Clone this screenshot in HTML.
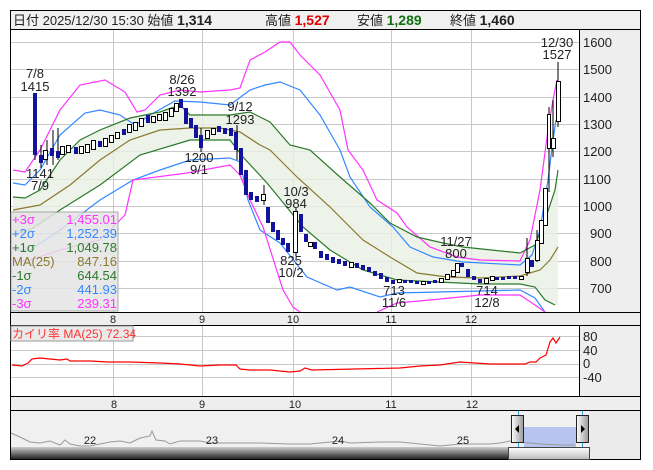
<!DOCTYPE html>
<html><head><meta charset="utf-8"><style>
body{margin:0;background:#fff;width:653px;height:470px;overflow:hidden;font-family:"Liberation Sans","Noto Sans CJK JP",sans-serif}
svg{position:absolute;left:0;top:0}
</style></head><body>
<svg width="653" height="470" viewBox="0 0 653 470" xmlns="http://www.w3.org/2000/svg" font-family="Liberation Sans, Noto Sans CJK JP, sans-serif">
<!-- header -->
<rect x="10.5" y="10.5" width="630" height="19" fill="#f0f0f0" stroke="#000"/>
<g font-size="13" fill="#222">
<text x="13" y="25">日付 2025/12/30 15:30 始値 <tspan font-weight="bold" font-size="14">1,314</tspan></text>
<text x="265" y="25">高値 <tspan font-weight="bold" font-size="14" fill="#e00000">1,527</tspan></text>
<text x="357" y="25">安値 <tspan font-weight="bold" font-size="14" fill="#107010">1,289</tspan></text>
<text x="450" y="25">終値 <tspan font-weight="bold" font-size="14">1,460</tspan></text>
</g>
<!-- main chart frame -->
<rect x="10.5" y="29.5" width="630" height="283" fill="#fff" stroke="#000"/>
<rect x="579" y="30" width="61" height="282" fill="#eeeeee"/>
<line x1="579.5" y1="30" x2="579.5" y2="312" stroke="#000"/>
<g stroke="#c8c8c8" stroke-width="1">
<line x1="11" y1="42.5" x2="579" y2="42.5"/><line x1="11" y1="69.5" x2="579" y2="69.5"/><line x1="11" y1="97.5" x2="579" y2="97.5"/><line x1="11" y1="124.5" x2="579" y2="124.5"/><line x1="11" y1="151.5" x2="579" y2="151.5"/><line x1="11" y1="179.5" x2="579" y2="179.5"/><line x1="11" y1="206.5" x2="579" y2="206.5"/><line x1="11" y1="233.5" x2="579" y2="233.5"/><line x1="11" y1="261.5" x2="579" y2="261.5"/><line x1="11" y1="288.5" x2="579" y2="288.5"/>
<line x1="113.5" y1="30" x2="113.5" y2="312"/><line x1="202.5" y1="30" x2="202.5" y2="312"/><line x1="293.5" y1="30" x2="293.5" y2="312"/><line x1="391.5" y1="30" x2="391.5" y2="312"/><line x1="471.5" y1="30" x2="471.5" y2="312"/>
</g>
<g font-size="13" fill="#222">
<text x="583" y="47">1600</text><text x="583" y="74">1500</text><text x="583" y="102">1400</text><text x="583" y="129">1300</text><text x="583" y="156">1200</text><text x="583" y="184">1100</text><text x="583" y="211">1000</text><text x="590" y="238">900</text><text x="590" y="266">800</text><text x="590" y="293">700</text>
</g>
<!-- shaded band -->
<polygon fill="#e8f0e4" opacity="0.8" points="13,197 25,198 40,190 60,160 80,140 100,130 130,118 160,112 180,105 190,115 230,115 250,112 270,122 290,145 310,150 340,177 370,203 390,223 417,237 443,243 463,247 520,253 535,245 545,220 555,190 558,170 558,305 555,305 545,300 535,287 520,284 480,284 397,280 363,270 330,250 303,227 267,183 243,157 230,140 190,140 140,155 100,185 60,210 30,230 13,235"/>
<g fill="none" stroke-width="1.2">
<polyline stroke="#ff33ff" points="13,170 25,172 40,150 60,110 80,85 105,80 125,92 137,112 145,110 160,95 180,90 200,92 230,90 240,88 250,60 265,52 280,42 290,42 300,55 320,75 340,110 348,150 363,170 377,200 397,213 407,227 430,247 457,257 480,260 520,261 530,240 540,190 548,130 553,100 557,80"/>
<polyline stroke="#3388ff" points="13,183 25,185 40,170 60,135 85,113 100,110 120,115 135,125 150,115 175,101 200,102 230,105 250,90 265,85 280,82 300,90 320,115 340,150 350,177 370,207 393,227 410,247 433,257 463,262 520,265 532,255 540,230 548,180 553,140 556,120"/>
<polyline stroke="#2a7a2a" points="13,197 25,198 40,190 60,160 80,140 100,130 130,118 160,112 180,105 190,115 230,115 250,112 270,122 290,145 310,150 340,177 370,203 390,223 417,237 443,243 463,247 520,253 535,245 545,220 555,190 558,170"/>
<polyline stroke="#8a7a30" points="13,210 40,205 70,185 100,160 130,140 160,130 190,128 220,128 240,132 260,145 270,150 297,177 330,207 363,240 390,257 417,273 447,277 480,278 520,276 540,270 550,260 558,247"/>
<polyline stroke="#2a7a2a" points="13,235 30,230 60,210 100,185 140,155 190,140 230,140 243,157 267,183 303,227 330,250 363,270 397,280 480,284 520,284 535,287 545,300 555,305"/>
<polyline stroke="#3388ff" points="13,250 30,250 60,230 100,200 133,180 160,170 190,160 230,158 240,162 248,200 260,230 280,243 307,277 337,290 350,287 380,297 397,293 480,291 520,290 535,298 545,312"/>
<polyline stroke="#ff33ff" points="13,262 30,260 60,250 100,240 125,215 133,180 187,173 230,165 240,175 250,200 263,227 283,290 293,307 300,312"/>
<polyline stroke="#ff33ff" points="377,312 397,303 430,300 480,295 520,295 535,305 545,312"/>
</g>
<!-- candles -->
<g stroke="#000" stroke-width="1">
<line x1="35" y1="93" x2="35" y2="160"/><line x1="41" y1="145" x2="41" y2="168"/><line x1="47" y1="140" x2="47" y2="165"/><line x1="53" y1="130" x2="53" y2="165"/><line x1="58" y1="128" x2="58" y2="160"/>
<line x1="201" y1="128" x2="201" y2="152"/><line x1="237" y1="125" x2="237" y2="160"/><line x1="264" y1="185" x2="264" y2="205"/><line x1="296" y1="208" x2="296" y2="256"/>
<line x1="527" y1="238" x2="527" y2="276"/><line x1="537" y1="230" x2="537" y2="262"/><line x1="549" y1="107" x2="549" y2="192"/><line x1="553" y1="100" x2="553" y2="157"/><line x1="558" y1="62" x2="558" y2="127"/>
</g>
<g fill="#12129a">
<rect x="33" y="93" width="4" height="62"/><rect x="39" y="155" width="4" height="8"/><rect x="50" y="148" width="4" height="8"/><rect x="56" y="151" width="4" height="7"/><rect x="74" y="147" width="4" height="7"/><rect x="98" y="141" width="4" height="6"/><rect x="122" y="129" width="4" height="6"/><rect x="146" y="115" width="4" height="8"/>
<rect x="179" y="99" width="4" height="9"/><rect x="184" y="108" width="4" height="16"/><rect x="189" y="118" width="4" height="10"/><rect x="194" y="125" width="4" height="13"/><rect x="199" y="135" width="4" height="13"/><rect x="217" y="126" width="4" height="6"/><rect x="223" y="128" width="4" height="6"/><rect x="229" y="128" width="4" height="8"/><rect x="234" y="132" width="4" height="18"/><rect x="239" y="148" width="4" height="27"/><rect x="244" y="170" width="4" height="25"/><rect x="249" y="192" width="4" height="8"/><rect x="255" y="196" width="4" height="6"/>
<rect x="266" y="207" width="4" height="16"/><rect x="271" y="222" width="4" height="10"/><rect x="276" y="230" width="4" height="10"/><rect x="281" y="238" width="4" height="7"/><rect x="286" y="243" width="4" height="9"/><rect x="299" y="214" width="4" height="18"/><rect x="304" y="234" width="4" height="8"/><rect x="313" y="242" width="4" height="7"/><rect x="319" y="251" width="4" height="7"/><rect x="325" y="254" width="4" height="6"/><rect x="331" y="257" width="4" height="6"/><rect x="337" y="259" width="4" height="5"/><rect x="343" y="261" width="4" height="5"/><rect x="355" y="263" width="4" height="5"/><rect x="361" y="265" width="4" height="5"/><rect x="367" y="267" width="4" height="5"/><rect x="373" y="271" width="4" height="5"/><rect x="379" y="273" width="4" height="6"/><rect x="385" y="277" width="4" height="5"/><rect x="391" y="280" width="4" height="4"/><rect x="403" y="280" width="4" height="3"/><rect x="409" y="280" width="4" height="3"/><rect x="415" y="281" width="4" height="3"/><rect x="427" y="281" width="4" height="3"/><rect x="433" y="280" width="4" height="3"/>
<rect x="460" y="263" width="4" height="4"/><rect x="466" y="269" width="4" height="8"/><rect x="472" y="276" width="4" height="4"/><rect x="478" y="279" width="4" height="4"/><rect x="495" y="277" width="4" height="3"/><rect x="501" y="277" width="4" height="3"/><rect x="507" y="276" width="4" height="3"/><rect x="513" y="276" width="4" height="3"/><rect x="530" y="260" width="4" height="7"/>
</g>
<g fill="#fff" stroke="#000" stroke-width="1">
<rect x="43.5" y="150.5" width="4" height="9"/><rect x="60.5" y="146.5" width="4" height="8"/><rect x="66.5" y="145.5" width="4" height="7"/><rect x="79.5" y="146.5" width="4" height="7"/><rect x="85.5" y="144.5" width="4" height="8"/><rect x="91.5" y="140.5" width="4" height="9"/><rect x="103.5" y="138.5" width="4" height="8"/><rect x="109.5" y="135.5" width="4" height="7"/><rect x="115.5" y="132.5" width="4" height="6"/><rect x="127.5" y="124.5" width="4" height="8"/><rect x="133.5" y="122.5" width="4" height="8"/><rect x="139.5" y="118.5" width="4" height="8"/><rect x="151.5" y="116.5" width="4" height="6"/><rect x="157.5" y="114.5" width="4" height="6"/><rect x="163.5" y="112.5" width="4" height="8"/><rect x="169.5" y="108.5" width="4" height="8"/><rect x="174.5" y="103.5" width="4" height="8"/>
<rect x="205.5" y="130.5" width="4" height="8"/><rect x="211.5" y="128.5" width="4" height="6"/><rect x="261.5" y="194.5" width="4" height="6"/><rect x="293.5" y="211.5" width="4" height="41"/><rect x="308.5" y="242.5" width="4" height="4"/><rect x="349.5" y="262.5" width="4" height="5"/><rect x="397.5" y="279.5" width="4" height="3"/><rect x="421.5" y="281.5" width="4" height="3"/><rect x="439.5" y="278.5" width="4" height="4"/><rect x="445.5" y="274.5" width="4" height="5"/><rect x="451.5" y="270.5" width="4" height="6"/><rect x="455.5" y="263.5" width="4" height="9"/><rect x="484.5" y="278.5" width="4" height="5"/><rect x="490.5" y="276.5" width="4" height="4"/><rect x="519.5" y="276.5" width="4" height="3"/><rect x="525.5" y="258.5" width="4" height="14"/><rect x="535.5" y="240.5" width="4" height="20"/><rect x="539.5" y="220.5" width="4" height="23"/><rect x="543.5" y="188.5" width="4" height="37"/><rect x="547.5" y="114.5" width="3" height="34"/><rect x="551.5" y="138.5" width="4" height="10"/><rect x="556.5" y="81.5" width="4" height="40"/>
</g>
<!-- annotations -->
<g font-size="13" fill="#222" text-anchor="middle">
<text x="35" y="78">7/8</text><text x="35" y="91">1415</text>
<text x="40" y="178">1141</text><text x="40" y="190">7/9</text>
<text x="182" y="84">8/26</text><text x="182" y="96">1392</text>
<text x="199" y="162">1200</text><text x="199" y="174">9/1</text>
<text x="240" y="111">9/12</text><text x="240" y="124">1293</text>
<text x="296" y="196">10/3</text><text x="296" y="208">984</text>
<text x="291" y="265">825</text><text x="291" y="277">10/2</text>
<text x="394" y="295">713</text><text x="394" y="307">11/6</text>
<text x="456" y="246">11/27</text><text x="456" y="258">800</text>
<text x="487" y="295">714</text><text x="487" y="307">12/8</text>
<text x="557" y="47">12/30</text><text x="557" y="59">1527</text>
</g>
<!-- legend -->
<rect x="11" y="212" width="107" height="99" fill="#e4e4e4" opacity="0.85" stroke="#999"/>
<g font-size="13">
<text x="12" y="224" fill="#ff33ff">+3σ</text><text x="117" y="224" fill="#ff33ff" text-anchor="end">1,455.01</text>
<text x="12" y="238" fill="#3388ff">+2σ</text><text x="117" y="238" fill="#3388ff" text-anchor="end">1,252.39</text>
<text x="12" y="252" fill="#2a7a2a">+1σ</text><text x="117" y="252" fill="#2a7a2a" text-anchor="end">1,049.78</text>
<text x="12" y="266" fill="#8a7a30">MA(25)</text><text x="117" y="266" fill="#8a7a30" text-anchor="end">847.16</text>
<text x="12" y="280" fill="#2a7a2a">-1σ</text><text x="117" y="280" fill="#2a7a2a" text-anchor="end">644.54</text>
<text x="12" y="294" fill="#3388ff">-2σ</text><text x="117" y="294" fill="#3388ff" text-anchor="end">441.93</text>
<text x="12" y="308" fill="#ff33ff">-3σ</text><text x="117" y="308" fill="#ff33ff" text-anchor="end">239.31</text>
</g>
<!-- x axis 1 -->
<rect x="10.5" y="312.5" width="630" height="13" fill="#eeeeee" stroke="#000"/>
<g font-size="11" fill="#222" text-anchor="middle"><text x="113" y="323">8</text><text x="202" y="323">9</text><text x="293" y="323">10</text><text x="391" y="323">11</text><text x="471" y="323">12</text></g>
<!-- deviation chart -->
<rect x="10.5" y="325.5" width="630" height="71" fill="#fff" stroke="#000"/>
<rect x="579" y="326" width="61" height="70" fill="#eeeeee"/>
<line x1="579.5" y1="326" x2="579.5" y2="396" stroke="#000"/>
<g stroke="#c8c8c8"><line x1="11" y1="336.5" x2="579" y2="336.5"/><line x1="11" y1="350.5" x2="579" y2="350.5"/><line x1="11" y1="364.5" x2="579" y2="364.5"/><line x1="11" y1="377.5" x2="579" y2="377.5"/>
<line x1="113.5" y1="326" x2="113.5" y2="396"/><line x1="202.5" y1="326" x2="202.5" y2="396"/><line x1="293.5" y1="326" x2="293.5" y2="396"/><line x1="391.5" y1="326" x2="391.5" y2="396"/><line x1="471.5" y1="326" x2="471.5" y2="396"/></g>
<polyline fill="none" stroke="#ff0000" stroke-width="1.2" points="12,365 22,366 28,363 32,359 40,358 50,359 60,360 67,359 70,361 90,361 108,362 130,362 160,363 180,364 200,366 220,365 236,365 240,369 250,370 270,370 290,372 300,371 305,368 312,370 400,368 420,366 440,365 460,362 475,363 490,364 525,364 530,362 536,362 540,358 546,355 550,342 553,338 556,343 560,337"/>
<g font-size="13" fill="#222"><text x="583" y="341">80</text><text x="583" y="355">40</text><text x="583" y="368">0</text><text x="583" y="382">-40</text></g>
<rect x="11" y="326" width="122" height="15" fill="#eaeaea" stroke="#999"/>
<text x="12" y="338" font-size="12" fill="#ff3333">カイリ率 MA(25)  72.34</text>
<!-- x axis 2 -->
<rect x="10.5" y="396.5" width="630" height="14" fill="#eeeeee" stroke="#000"/>
<g font-size="11" fill="#222" text-anchor="middle"><text x="114" y="408">8</text><text x="202" y="408">9</text><text x="295" y="408">10</text><text x="391" y="408">11</text><text x="472" y="408">12</text></g>
<!-- navigator -->
<rect x="10.5" y="410.5" width="630" height="49" fill="#f0f0f0" stroke="#000"/>
<rect x="590" y="411" width="50" height="48" fill="#eaeaea"/>
<rect x="524" y="427" width="52" height="20" fill="#b8c4f0"/>
<polyline fill="none" stroke="#999" stroke-width="1" points="11,433 20,437 30,442 40,443 50,441 60,445 65,440 70,444 80,446 90,446 100,444 110,442 120,441 130,443 140,438 150,436 152,431 156,440 165,441 170,444 180,441 190,441 200,441 210,443 230,443 260,443 290,444 310,444 320,443 330,442 340,441 350,443 380,442 400,442 440,446 460,444 490,444 500,443 510,441 520,442 540,444 560,445 575,445"/>
<g font-size="11" fill="#222" text-anchor="middle"><text x="90" y="444">22</text><text x="212" y="444">23</text><text x="338" y="444">24</text><text x="463" y="444">25</text></g>
<line x1="518.5" y1="411" x2="518.5" y2="447" stroke="#33aadd"/><line x1="582.5" y1="411" x2="582.5" y2="447" stroke="#33aadd"/>
<defs><linearGradient id="g1" x1="0" y1="0" x2="0" y2="1"><stop offset="0" stop-color="#ccc"/><stop offset="0.5" stop-color="#777"/><stop offset="1" stop-color="#222"/></linearGradient>
<linearGradient id="g2" x1="0" y1="0" x2="0" y2="1"><stop offset="0" stop-color="#fff"/><stop offset="1" stop-color="#bbb"/></linearGradient>
<linearGradient id="g3" x1="0" y1="0" x2="1" y2="0"><stop offset="0" stop-color="#fff"/><stop offset="1" stop-color="#999"/></linearGradient></defs>
<rect x="11" y="447" width="498" height="12" fill="url(#g1)"/>
<rect x="508.5" y="447.5" width="81" height="12" fill="url(#g2)" stroke="#444"/>
<rect x="511.5" y="415.5" width="12" height="27" fill="url(#g3)" stroke="#222"/>
<polygon points="519,425 519,433 515,429" fill="#000"/>
<rect x="576.5" y="415.5" width="12" height="27" fill="url(#g3)" stroke="#222"/>
<polygon points="581,425 581,433 585,429" fill="#000"/>
</svg>
</body></html>
